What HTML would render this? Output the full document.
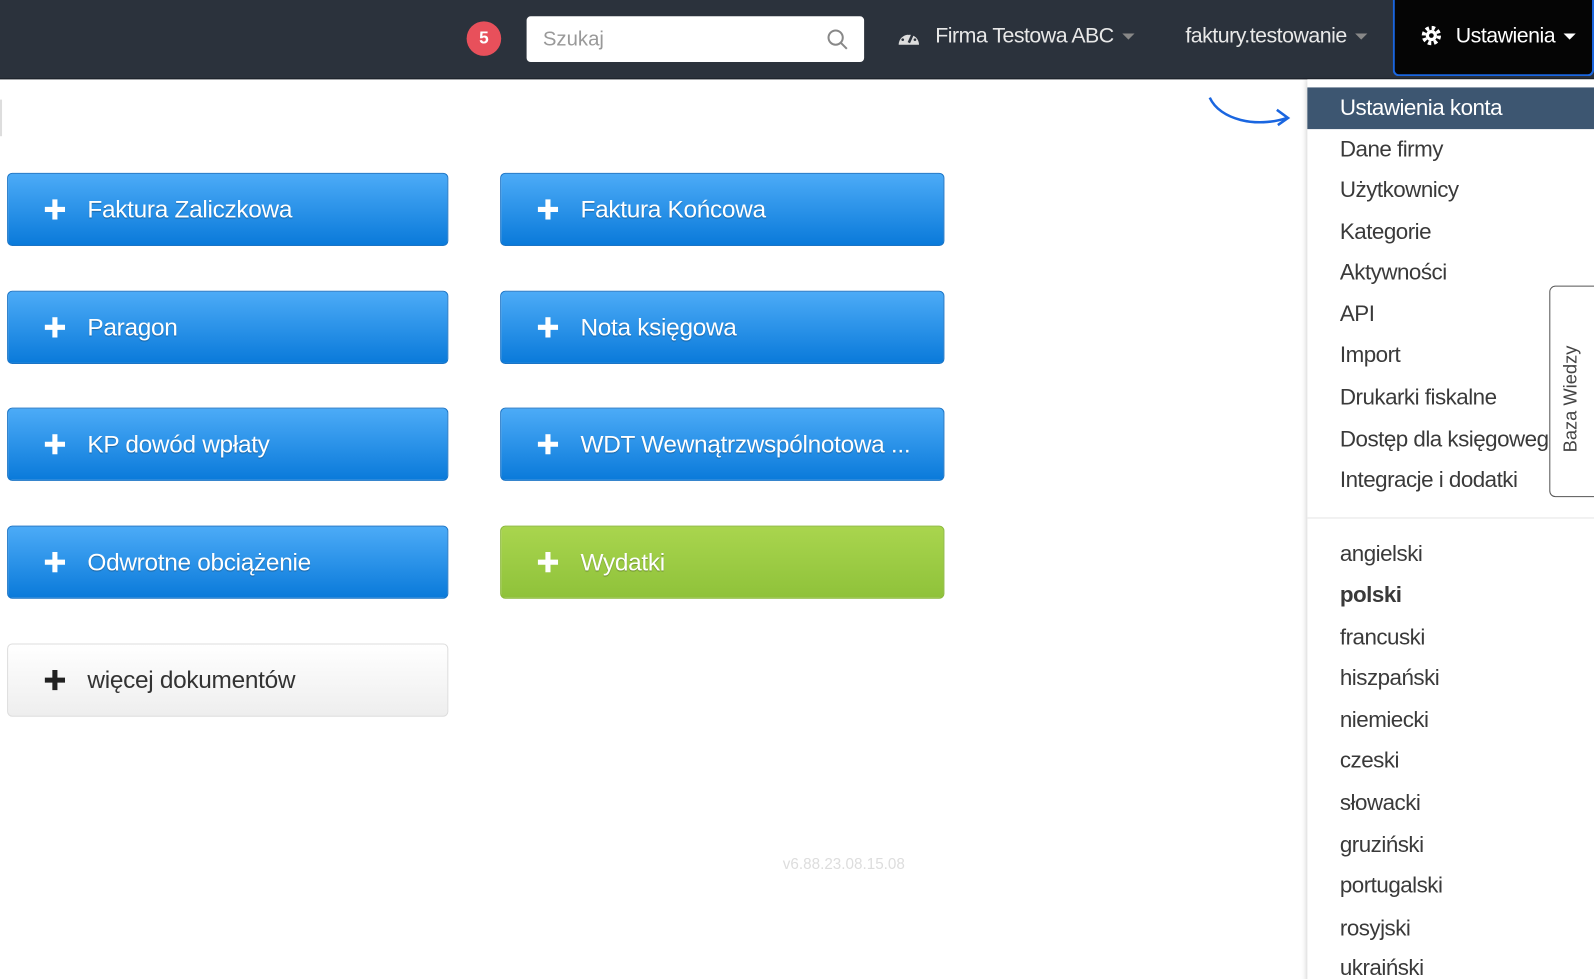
<!DOCTYPE html>
<html><head><meta charset="utf-8"><style>
body{margin:0;width:1594px;height:979px;overflow:hidden;background:#fff;font-family:"Liberation Sans",sans-serif;position:relative}
#w{position:absolute;left:0;top:0;width:1568px;height:963px;transform:scale(1.0166);transform-origin:0 0;overflow:hidden}
.nav{position:absolute;left:0;top:0;width:1568px;height:77px;background:#2b323c;border-bottom:1px solid #1a1f26}
.badge{position:absolute;left:459px;top:21px;width:34px;height:34px;border-radius:50%;background:#e8505b;color:#fff;font-weight:bold;font-size:17px;text-align:center;line-height:34px}
.search{position:absolute;left:518px;top:16px;width:332px;height:45px;background:#fff;border-radius:4px}
.search span{position:absolute;left:16px;top:12px;font-size:20px;color:#999}
.ni{position:absolute;top:24px;color:#e8e8e8;font-size:21px;letter-spacing:-0.5px;white-space:nowrap}
.caret{display:inline-block;border-left:6px solid transparent;border-right:6px solid transparent;border-top:6px solid #888;vertical-align:middle;margin-left:8px}
.ust{position:absolute;left:1370px;top:0;width:194px;height:73px;background:#050505;border:2px solid #1a66e0;border-top:none;border-radius:0 0 6px 6px}
.btn{position:absolute;width:434px;height:72px;border-radius:5px;background:linear-gradient(#4cabf7,#0a7ada);border:1px solid #1a74c6;color:#fff;font-size:24px;box-sizing:border-box;text-shadow:0 1px 1px rgba(0,0,0,.3)}
.btn svg{position:absolute;left:36px;top:25px}
.btn span{position:absolute;left:78px;top:22px;letter-spacing:-0.3px;white-space:nowrap}
.green{background:linear-gradient(#a9d54e,#8fc23a);border-color:#8ab83a}
.grey{background:linear-gradient(#fff,#eee);border-color:#ddd;color:#333;text-shadow:none}
.dd{position:absolute;left:1286px;top:78px;width:300px;height:901px;background:#fff;box-shadow:-2px 0 4px rgba(0,0,0,.15)}
.dd .t{position:absolute;left:32px;font-size:22px;color:#3a3a3a;letter-spacing:-0.5px;white-space:nowrap}
.act{position:absolute;left:0;top:8px;width:300px;height:41px;background:#3d5671}
.hr{position:absolute;left:0;top:431px;width:300px;height:1px;background:#e5e5e5}
.bw{position:absolute;left:1524px;top:281px;width:60px;height:206px;border:1.5px solid #555;border-radius:6px;background:#fff}
.bw span{position:absolute;left:10px;top:163px;transform:rotate(-90deg);transform-origin:0 0;font-size:18px;color:#444;white-space:nowrap}
</style></head><body><div id="w">
<div class="nav">
<div class="badge">5</div>
<div class="search"><span>Szukaj</span>
<svg style="position:absolute;left:294px;top:11px" width="24" height="24" viewBox="0 0 24 24" fill="none" stroke="#888" stroke-width="2"><circle cx="10" cy="10" r="7"/><path d="M15 15l6 6"/></svg></div>
<svg style="position:absolute;left:883px;top:26px" width="22" height="20" viewBox="0 0 22 20"><path d="M1 18A10 10 0 0 1 21 18Z" fill="#ddd"/><path d="M11 16L15 7" stroke="#2b323c" stroke-width="2.5"/><circle cx="5" cy="13" r="1.3" fill="#2b323c"/><circle cx="11" cy="7" r="1.3" fill="#2b323c"/><circle cx="17" cy="13" r="1.3" fill="#2b323c"/></svg>
<div class="ni" style="left:920px">Firma Testowa ABC<span class="caret"></span></div>
<div class="ni" style="left:1166px">faktury.testowanie<span class="caret"></span></div>
<div class="ust"><svg style="position:absolute;left:26px;top:25px" width="20" height="20" viewBox="0 0 20 20"><circle cx="10" cy="10" r="7.5" fill="none" stroke="#fff" stroke-width="4" stroke-dasharray="3.3 2.6"/><circle cx="10" cy="10" r="5.5" fill="#fff"/><circle cx="10" cy="10" r="2.3" fill="#050505"/></svg>
<div class="ni" style="left:60px;color:#fff">Ustawienia<span class="caret" style="border-top-color:#fff"></span></div></div>
</div>
<div style="position:absolute;left:0;top:98px;width:2px;height:36px;background:#ddd"></div>
<svg width="0" height="0" style="position:absolute"><defs><g id="p"><path d="M7.5 0h5v7.5h7.5v5h-7.5v7.5h-5v-7.5h-7.5v-5h7.5z"/></g></defs></svg>
<div class="btn" style="left:7px;top:170px"><svg width="20" height="20" fill="#fff"><use href="#p"/></svg><span>Faktura Zaliczkowa</span></div>
<div class="btn" style="left:492px;top:170px;width:437px"><svg width="20" height="20" fill="#fff"><use href="#p"/></svg><span>Faktura Końcowa</span></div>
<div class="btn" style="left:7px;top:286px"><svg width="20" height="20" fill="#fff"><use href="#p"/></svg><span>Paragon</span></div>
<div class="btn" style="left:492px;top:286px;width:437px"><svg width="20" height="20" fill="#fff"><use href="#p"/></svg><span>Nota księgowa</span></div>
<div class="btn" style="left:7px;top:401px"><svg width="20" height="20" fill="#fff"><use href="#p"/></svg><span>KP dowód wpłaty</span></div>
<div class="btn" style="left:492px;top:401px;width:437px"><svg width="20" height="20" fill="#fff"><use href="#p"/></svg><span>WDT Wewnątrzwspólnotowa ...</span></div>
<div class="btn" style="left:7px;top:517px"><svg width="20" height="20" fill="#fff"><use href="#p"/></svg><span>Odwrotne obciążenie</span></div>
<div class="btn green" style="left:492px;top:517px;width:437px"><svg width="20" height="20" fill="#fff"><use href="#p"/></svg><span>Wydatki</span></div>
<div class="btn grey" style="left:7px;top:633px"><svg width="20" height="20" fill="#222"><use href="#p"/></svg><span>więcej dokumentów</span></div>
<div style="position:absolute;left:770px;top:842px;font-size:15px;color:#ddd">v6.88.23.08.15.08</div>
<svg style="position:absolute;left:1186px;top:92px" width="88" height="36" viewBox="0 0 88 36" fill="none" stroke="#1a66e0" stroke-width="2.5"><path d="M4 4C14 26 50 34 80 24"/><path d="M70 16L81 24L71 31"/></svg>
<div class="dd">
<div class="act"></div>
<div class="t" style="top:15px;color:#fff">Ustawienia konta</div>
<div class="t" style="top:56px">Dane firmy</div>
<div class="t" style="top:96px">Użytkownicy</div>
<div class="t" style="top:137px">Kategorie</div>
<div class="t" style="top:177px">Aktywności</div>
<div class="t" style="top:218px">API</div>
<div class="t" style="top:258px">Import</div>
<div class="t" style="top:300px">Drukarki fiskalne</div>
<div class="t" style="top:341px">Dostęp dla księgowego</div>
<div class="t" style="top:381px">Integracje i dodatki</div>
<div class="hr"></div>
<div class="t" style="top:454px">angielski</div>
<div class="t" style="top:494px;font-weight:bold">polski</div>
<div class="t" style="top:536px">francuski</div>
<div class="t" style="top:576px">hiszpański</div>
<div class="t" style="top:617px">niemiecki</div>
<div class="t" style="top:657px">czeski</div>
<div class="t" style="top:699px">słowacki</div>
<div class="t" style="top:740px">gruziński</div>
<div class="t" style="top:780px">portugalski</div>
<div class="t" style="top:822px">rosyjski</div>
<div class="t" style="top:861px">ukraiński</div>
</div>
<div class="bw"><span>Baza Wiedzy</span></div>
</div></body></html>
